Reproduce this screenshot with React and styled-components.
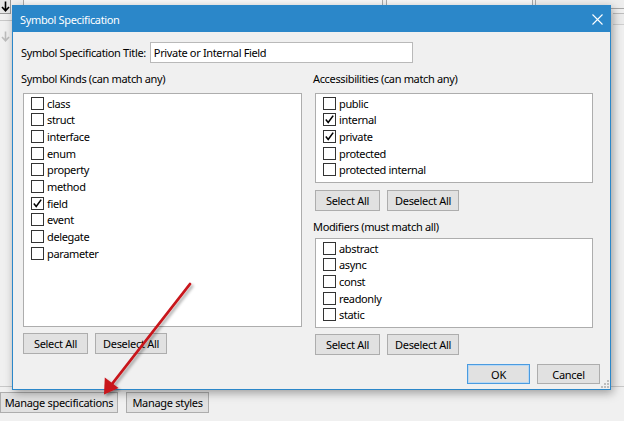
import React from "react";
import styled, { createGlobalStyle } from "styled-components";

const GlobalStyle = createGlobalStyle`
  html, body { margin: 0; padding: 0; background: #f0f0f0; overflow: hidden; }
  * { box-sizing: border-box; }
`;

const FONT = `"Noto Sans", "Open Sans", sans-serif`;

const Desk = styled.div`
  position: relative;
  width: 624px;
  height: 421px;
  background: #f0f0f0;
  display: flex;
  flex-direction: column;
  overflow: hidden;
  font-family: ${FONT};
  font-size: 11px;
  letter-spacing: -0.35px;
  color: #000;
`;

/* ---------- window behind the dialog ---------- */
const BackArea = styled.div`
  height: 387px;
  display: flex;
  border-bottom: 1px solid #c8c8c8;
`;

const Gutter = styled.div`
  width: 12px;
  display: flex;
  flex-direction: column;
  align-items: flex-start;
`;

const ArrowBtn = styled.div`
  width: 11px;
  height: 14px;
  border-right: 1px solid ${(p) => (p.faint ? "transparent" : "#9a9a9a")};
  border-bottom: 1px solid ${(p) => (p.faint ? "transparent" : "#9a9a9a")};
  background: ${(p) => (p.faint ? "transparent" : "#e8e8e8")};
  margin-top: ${(p) => (p.faint ? 9 : 0)}px;
  display: flex;
  align-items: center;
  justify-content: center;
`;

const GutterRule = styled.div`
  width: 12px;
  height: 1px;
  margin-top: 6px;
  background: #c8c8c8;
`;

const BackMain = styled.div`
  flex: 1;
  display: flex;
  flex-direction: column;
`;

const BackStrip = styled.div`
  display: flex;
  height: 9px;
  margin-top: -4px;
`;

const BackField = styled.div`
  width: ${(p) => p.w}px;
  margin-left: ${(p) => p.ml || 0}px;
  height: 13px;
  border: 1px solid #a8a8a8;
  background: ${(p) => p.bg || "#f7f7f7"};
`;

const BackSide = styled.div`
  align-self: flex-end;
  width: 14px;
  height: 12px;
  margin-top: 8px;
  border-top: 1px solid #bdbdbd;
  border-bottom: 1px solid #cfcfcf;
  background: #ececec;
`;

const BottomBar = styled.div`
  display: flex;
  gap: 8px;
  padding-top: 5px;
`;

/* ---------- shared controls ---------- */
const Button = styled.button`
  width: ${(p) => p.w}px;
  height: ${(p) => p.h || 21}px;
  padding: 0;
  background: #e1e1e1;
  border: 1px solid ${(p) => (p.primary ? "#4a9be0" : "#adadad")};
  box-shadow: ${(p) => (p.primary ? "inset 0 0 0 1px #b9d8f3" : "none")};
  font-family: ${FONT};
  font-size: 11px;
  letter-spacing: -0.3px;
  color: #000;
  line-height: 1;
`;

/* ---------- dialog ---------- */
const Dialog = styled.div`
  position: absolute;
  left: 12px;
  top: 5px;
  width: 599px;
  height: 385px;
  display: flex;
  flex-direction: column;
  background: #f0f0f0;
  border: 1px solid #2b87c9;
  box-shadow: 2px 3px 9px rgba(0, 0, 0, 0.35);
`;

const TitleBar = styled.div`
  height: 26px;
  flex: none;
  background: #2b87c9;
  color: #fff;
  display: flex;
  align-items: center;
  justify-content: space-between;
  padding-left: 7px;
  font-size: 11px;
`;

const CloseBtn = styled.div`
  width: 26px;
  height: 26px;
  display: flex;
  align-items: center;
  justify-content: center;
`;

const Body = styled.div`
  flex: 1;
  display: flex;
  flex-direction: column;
  padding: 10px 17px 0 8px;
  position: relative;
`;

const TitleRow = styled.div`
  display: flex;
  align-items: center;
  gap: 4px;
  height: 21px;
`;

const TextInput = styled.div`
  width: 263px;
  height: 21px;
  border: 1px solid #b9b9b9;
  background: #fff;
  padding-left: 3px;
  display: flex;
  align-items: center;
`;

const Columns = styled.div`
  display: flex;
  gap: 11px;
  margin-top: 9px;
`;

const Column = styled.div`
  width: ${(p) => p.w}px;
  display: flex;
  flex-direction: column;
`;

const Header = styled.div`
  height: 14px;
  line-height: 14px;
  margin-top: ${(p) => p.mt || 0}px;
  margin-bottom: ${(p) => p.mb}px;
`;

const ListBox = styled.div`
  margin-left: 2px;
  height: ${(p) => p.h}px;
  background: #fff;
  border: 1px solid #adadad;
  padding: 1px 0 0 7px;
`;

const Item = styled.div`
  height: 16.67px;
  display: flex;
  align-items: center;
  gap: 3px;
`;

const Box = styled.span`
  width: 13px;
  height: 13px;
  border: 1px solid #333;
  background: #fff;
  display: flex;
  align-items: center;
  justify-content: center;
  flex: none;
`;

const ButtonRow = styled.div`
  display: flex;
  gap: 7px;
  margin-left: 2px;
  margin-top: ${(p) => p.mt}px;
`;

const Footer = styled.div`
  display: flex;
  justify-content: flex-end;
  gap: 7px;
  margin-top: 9px;
  margin-right: -7px;
`;

const Grip = styled.svg`
  position: absolute;
  right: 1px;
  bottom: 1px;
`;

const Annotation = styled.svg`
  position: absolute;
  left: 0;
  top: 0;
  pointer-events: none;
  overflow: visible;
`;

function DownArrow({ color }) {
  return (
    <svg width="9" height="11" viewBox="0 0 9 11">
      <path d="M4.5 0.5 V9.5 M1 6 L4.5 9.8 L8 6" fill="none" stroke={color} strokeWidth="1.6" />
    </svg>
  );
}

function Check({ on, label }) {
  return (
    <Item>
      <Box>
        {on && (
          <svg width="11" height="11" viewBox="0 0 11 11">
            <path d="M1.8 5.6 L4.2 8.4 L9.2 1.6" fill="none" stroke="#000" strokeWidth="1.6" />
          </svg>
        )}
      </Box>
      <span>{label}</span>
    </Item>
  );
}

const kinds = [
  ["class"], ["struct"], ["interface"], ["enum"], ["property"], ["method"],
  ["field", true], ["event"], ["delegate"], ["parameter"],
];
const access = [["public"], ["internal", true], ["private", true], ["protected"], ["protected internal"]];
const mods = [["abstract"], ["async"], ["const"], ["readonly"], ["static"]];

function SelectButtons({ mt }) {
  return (
    <ButtonRow mt={mt}>
      <Button w={65}>Select All</Button>
      <Button w={72}>Deselect All</Button>
    </ButtonRow>
  );
}

export default function App() {
  return (
    <>
      <GlobalStyle />
      <Desk>
        <BackArea>
          <Gutter>
            <ArrowBtn>
              <DownArrow color="#000" />
            </ArrowBtn>
            <GutterRule />
            <ArrowBtn faint>
              <DownArrow color="#bdbdbd" />
            </ArrowBtn>
          </Gutter>
          <BackMain>
            <BackStrip>
              <BackField w={360} ml={11} />
              <BackField w={147} ml={3} />
              <BackField w={92} ml={2} bg="#eeeeee" />
            </BackStrip>
            <BackSide />
          </BackMain>
        </BackArea>
        <BottomBar>
          <Button w={118}>Manage specifications</Button>
          <Button w={83}>Manage styles</Button>
        </BottomBar>

        <Dialog>
          <TitleBar>
            <span>Symbol Specification</span>
            <CloseBtn>
              <svg width="11" height="11" viewBox="0 0 11 11">
                <path d="M0.5 0.5 L10.5 10.5 M10.5 0.5 L0.5 10.5" stroke="#fff" strokeWidth="1.1" />
              </svg>
            </CloseBtn>
          </TitleBar>
          <Body>
            <TitleRow>
              <span>Symbol Specification Title:</span>
              <TextInput>Private or Internal Field</TextInput>
            </TitleRow>
            <Columns>
              <Column w={281}>
                <Header mb={7}>Symbol Kinds (can match any)</Header>
                <ListBox h={234}>
                  {kinds.map(([l, on]) => (
                    <Check key={l} label={l} on={on} />
                  ))}
                </ListBox>
                <SelectButtons mt={6} />
              </Column>
              <Column w={280}>
                <Header mb={7}>Accessibilities (can match any)</Header>
                <ListBox h={90}>
                  {access.map(([l, on]) => (
                    <Check key={l} label={l} on={on} />
                  ))}
                </ListBox>
                <SelectButtons mt={7} />
                <Header mt={9} mb={4}>Modifiers (must match all)</Header>
                <ListBox h={90}>
                  {mods.map(([l, on]) => (
                    <Check key={l} label={l} on={on} />
                  ))}
                </ListBox>
                <SelectButtons mt={6} />
              </Column>
            </Columns>
            <Footer>
              <Button w={63} h={20} primary>OK</Button>
              <Button w={63} h={20}>Cancel</Button>
            </Footer>
            <Grip width="8" height="8" viewBox="0 0 8 8">
              {[[6, 0], [6, 3], [3, 3], [6, 6], [3, 6], [0, 6]].map(([x, y], i) => (
                <rect key={i} x={x} y={y} width="2" height="2" fill="#bdbdbd" />
              ))}
            </Grip>
          </Body>
        </Dialog>

        <Annotation width="624" height="421">
          <defs>
            <filter id="sh" x="-50%" y="-50%" width="200%" height="200%">
              <feDropShadow dx="2" dy="2" stdDeviation="1.6" floodColor="#000" floodOpacity="0.35" />
            </filter>
          </defs>
          <g filter="url(#sh)">
            <line x1="190" y1="284" x2="112" y2="384" stroke="#c8141a" strokeWidth="2.8" strokeLinecap="round" />
            <path d="M104 394.5 L104.8 377.5 L118.5 388 Z" fill="#c8141a" />
          </g>
        </Annotation>
      </Desk>
    </>
  );
}
